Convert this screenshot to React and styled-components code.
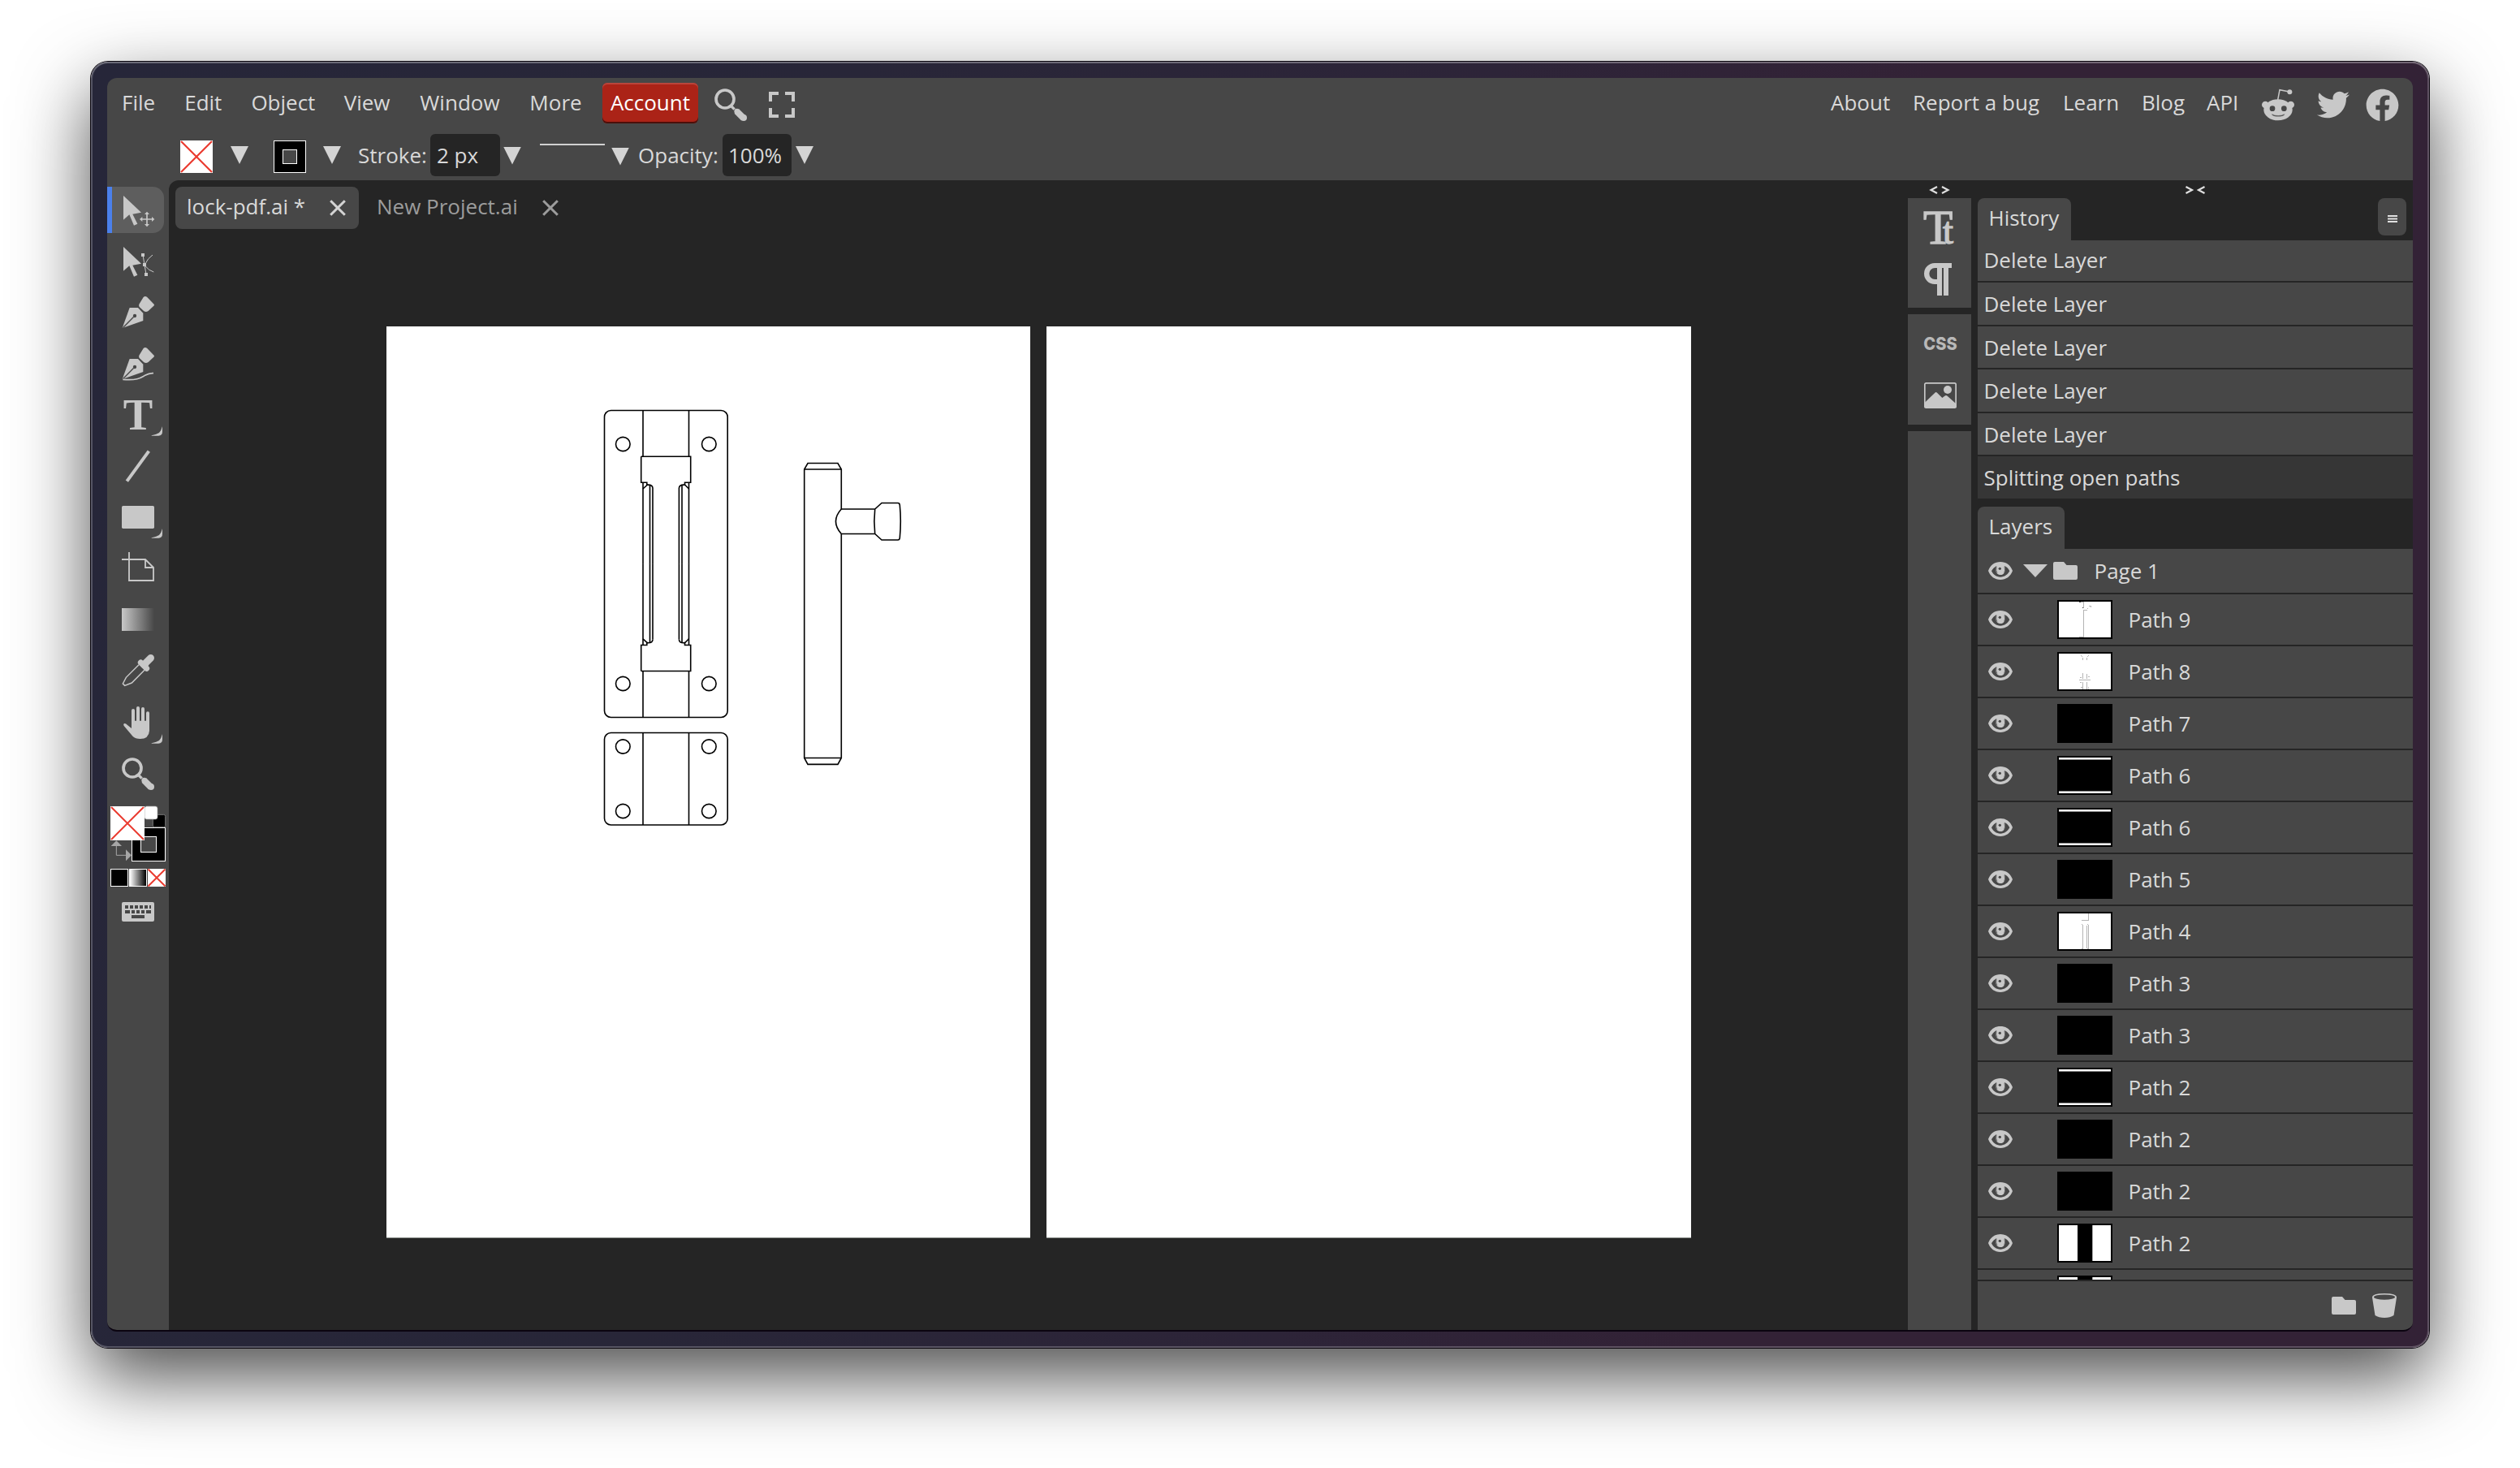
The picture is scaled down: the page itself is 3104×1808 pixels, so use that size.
import React from "react";
import styled, { createGlobalStyle } from "styled-components";
import { FaTwitter, FaFacebook } from "react-icons/fa";

const c = {
  panel: "#474747",
  dark: "#252525",
  text: "#d9d9d9",
  icon: "#c8c8c8",
  line: "#252525",
};

const Global = createGlobalStyle`
  * { box-sizing: border-box; }
  body { margin: 0; background: #fff; }
  svg { display: block; flex: none; }
`;

const Desktop = styled.div`
  width: 3104px;
  height: 1808px;
  padding: 76px 112px 148px;
  background: #fff;
  overflow: hidden;
  font-family: "Open Sans", "Noto Sans", sans-serif;
  font-size: 26px;
  color: ${c.text};
  white-space: nowrap;
`;

const Frame = styled.div`
  width: 2880px;
  height: 1584px;
  padding: 20px 20px 20px;
  border-radius: 21px;
  background: linear-gradient(100deg, #262639 0%, #282638 30%, #2d2438 55%, #332236 72%, #332236 100%);
  box-shadow: inset 0 0 0 2px rgba(255, 255, 255, 0.22), inset 0 2px 0 rgba(255, 255, 255, 0.12),
    0 0 0 1px #0c0810, 0 36px 90px rgba(0, 0, 0, 0.7);
`;

const AppShell = styled.div`
  height: 1544px;
  display: flex;
  flex-direction: column;
  border-radius: 12px;
  border-bottom: 2px solid #0b0410;
  background: ${c.panel};
  overflow: hidden;
`;

const MenuBar = styled.nav`
  height: 60px;
  display: flex;
  align-items: center;
  padding: 0 17px 0 1px;
`;

const MenuItem = styled.span`
  width: ${(p) => p.$w}px;
  padding-left: ${(p) => p.$pad ?? 17}px;
  line-height: 60px;
`;

const AccountButton = styled.span`
  width: 118px;
  height: 50px;
  margin-top: 2px;
  margin-left: 17px;
  border-radius: 6px;
  background: #ab2317;
  box-shadow: inset 0 2px 0 #b9453b, inset 0 -2px 0 #4b0f0a;
  color: #fff;
  text-align: center;
  line-height: 48px;
`;

const MenuIcons = styled.div`
  display: flex;
  gap: 27px;
  margin-left: 20px;
  padding-top: 5px;
`;

const Links = styled.div`
  display: flex;
  align-items: center;
  margin-left: auto;
`;

const Social = styled.span`
  display: flex;
  padding-top: 6px;
  margin-left: ${(p) => p.$gap}px;
  color: ${c.icon};
`;

const OptionsBar = styled.div`
  height: 66px;
  display: flex;
  align-items: center;
  padding: 4px 0 0 90px;
`;

const Swatch = styled.div`
  width: 40px;
  height: 40px;
  margin-top: 4px;
  margin-left: ${(p) => p.$gap ?? 0}px;
`;

const Dropdown = styled.div`
  width: 22px;
  height: 22px;
  margin-left: ${(p) => p.$gap}px;
  margin-top: ${(p) => p.$drop ?? 0}px;
  background: ${(p) => p.$color ?? "#d4d4d4"};
  clip-path: polygon(0 0, 100% 0, 50% 100%);
`;

const OptionLabel = styled.span`
  width: ${(p) => p.$w}px;
  margin-left: ${(p) => p.$gap}px;
  line-height: 52px;
`;

const Field = styled.div`
  width: ${(p) => p.$w}px;
  height: 52px;
  padding-left: ${(p) => p.$pad ?? 8}px;
  border-radius: 6px;
  background: ${c.dark};
  line-height: 52px;
`;

const DashPreview = styled.div`
  width: 80px;
  height: 2px;
  margin: 0 0 26px 23px;
  background: #d0d0d0;
`;

const Main = styled.div`
  flex: 1;
  min-height: 0;
  display: flex;
`;

const ToolColumn = styled.aside`
  width: 76px;
  display: flex;
  flex-direction: column;
  gap: 6px;
  padding-top: 8px;
`;

const Tool = styled.div`
  width: ${(p) => (p.$active ? 70 : 76)}px;
  height: 57px;
  border-radius: 0 14px 14px 0;
  background: ${(p) => (p.$active ? "linear-gradient(90deg, #4b80ec 6px, #5e5e5e 6px)" : "none")};
`;

const ModeRow = styled.div`
  height: 22px;
  display: flex;
  gap: 1px;
  padding-left: 4px;
`;

const ModeBox = styled.div`
  width: 22px;
  height: 22px;
  border: 1px solid #fff;
  background: ${(p) => p.$bg};
`;

const Workspace = styled.section`
  flex: 1;
  display: flex;
  flex-direction: column;
  background: ${c.dark};
  border-top-left-radius: 12px;
`;

const Tabs = styled.div`
  display: flex;
  padding: 8px 0 0 8px;
`;

const Tab = styled.div`
  height: 52px;
  display: flex;
  align-items: center;
  padding-left: ${(p) => (p.$active ? 14 : 22)}px;
  width: ${(p) => p.$w}px;
  border-radius: 8px;
  background: ${(p) => (p.$active ? c.panel : "transparent")};
  color: ${(p) => (p.$active ? c.text : "#9c9c9c")};
`;

const TabName = styled.span`
  width: ${(p) => p.$w}px;
  line-height: 52px;
  padding-bottom: 4px;
`;

const Pages = styled.div`
  display: flex;
  gap: 20px;
  padding: 120px 0 0 267.5px;
`;

const Page = styled.div`
  width: 793.5px;
  height: 1122px;
  padding: 78px 0 0 244.5px;
  background: #fff;
  box-shadow: 0 1px 0 #868b87;
`;

const Strip = styled.div`
  width: 78px;
  display: flex;
  flex-direction: column;
`;

const Collapse = styled.div`
  height: 22px;
  display: flex;
  justify-content: center;
  align-items: center;
  padding-top: 1px;
`;

const StripGroup = styled.div`
  height: ${(p) => p.$h};
  flex: ${(p) => (p.$grow ? 1 : "none")};
  background: ${c.panel};
`;

const StripBox = styled.div`
  display: flex;
  flex-direction: column;
  flex: 1;
  gap: 8px;
`;

const SideArea = styled.aside`
  width: 622px;
  display: flex;
  gap: 8px;
  background: ${c.dark};
`;

const PanelColumn = styled.div`
  width: 536px;
  display: flex;
  flex-direction: column;
`;

const PanelHead = styled.div`
  height: 52px;
  display: flex;
  justify-content: space-between;
  padding-right: 8px;
`;

const PanelTab = styled.div`
  width: ${(p) => p.$w}px;
  height: 52px;
  padding: 0 0 4px 13.5px;
  border-radius: 8px 8px 0 0;
  background: ${c.panel};
  line-height: 48px;
`;

const PanelMenu = styled.div`
  width: 35px;
  height: 46px;
  display: flex;
  align-items: center;
  justify-content: center;
  padding-top: 4px;
  border-radius: 8px;
  background: ${c.panel};
`;

const HistoryList = styled.div`
  height: 318px;
  display: flex;
  flex-direction: column;
  justify-content: flex-end;
  overflow: hidden;
  margin-bottom: 10px;
`;

const HistoryRow = styled.div`
  flex: none;
  height: ${(p) => p.$h}px;
  padding-left: 7.5px;
  line-height: 52px;
  background: ${(p) => (p.$current ? "#363636" : c.panel)};
  border-bottom: ${(p) => (p.$current ? 0 : 2)}px solid ${c.line};
`;

const LayerList = styled.div`
  flex: 1;
  min-height: 0;
  overflow: hidden;
  background: ${c.panel};
`;

const LayerRow = styled.div`
  height: ${(p) => (p.$group ? 56 : 64)}px;
  display: flex;
  align-items: center;
  padding-left: 13px;
  border-bottom: 2px solid ${c.line};
  line-height: ${(p) => (p.$group ? 54 : 62)}px;
`;

const Thumb = styled.div`
  width: 68px;
  height: 48px;
  margin: 0 19.5px 0 55px;
  border: 2px solid #000;
  background: ${(p) => p.$bg};
`;

const GroupIcons = styled.div`
  width: 100.5px;
  display: flex;
  align-items: center;
  gap: 7px;
  padding-left: 13px;
`;

const GroupArrow = styled(Dropdown)`
  width: 30px;
  height: 16px;
`;

const Footer = styled.div`
  height: 62px;
  display: flex;
  justify-content: flex-end;
  align-items: center;
  gap: 20px;
  padding: 0 20px 1px 0;
  border-top: 2px solid ${c.line};
  background: ${c.panel};
`;

/* ---------- small drawings ---------- */

const Cross = ({ size = 40 }) => (
  <svg width={size} height={size} viewBox="0 0 40 40">
    <rect width="40" height="40" fill="#fff" />
    <path d="M1 1L39 39M39 1L1 39" stroke="#ea3b30" strokeWidth={size < 30 ? 3.6 : 2.2} />
  </svg>
);

const StrokeSwatch = () => (
  <svg width="40" height="40" viewBox="0 0 40 40">
    <rect width="40" height="40" fill="#fff" />
    <rect x="1" y="1" width="38" height="38" fill="#000" />
    <rect x="11.500" y="11.500" width="17" height="17" fill={c.panel} stroke="#fff" />
  </svg>
);

const Magnifier = (props) => (
  <g {...props}>
    <circle cx="39" cy="39" r="33" fill="none" stroke={c.icon} strokeWidth="11" />
    <path d="M61 64L74 77" stroke={c.icon} strokeWidth="10" />
    <path d="M82 84L108 110" stroke={c.icon} strokeWidth="24" />
    <circle cx="108" cy="108" r="12" fill={c.icon} />
    <circle cx="83" cy="84" r="10" fill={c.icon} />
  </g>
);

const CloseX = ({ color }) => (
  <svg width="20" height="20" viewBox="0 0 20 20">
    <path d="M1.200 1.200L18.800 18.800M18.800 1.200L1.200 18.800" stroke={color} strokeWidth="3" />
  </svg>
);

const Reddit = () => (
  <svg width="40" height="40" viewBox="0 0 120 120">
    <g fill={c.icon}>
      <path d="M59 42L66 5L98 11" fill="none" stroke={c.icon} strokeWidth="4.500" />
      <circle cx="103" cy="13" r="9" />
      <circle cx="13" cy="60" r="13" />
      <circle cx="107" cy="60" r="13" />
      <ellipse cx="60" cy="79" rx="53" ry="39" />
    </g>
    <g fill={c.panel}>
      <circle cx="39" cy="74" r="10" />
      <circle cx="82" cy="74" r="10" />
      <path d="M37 95Q60 106 84 95Q80 103 60 103Q41 103 37 95Z" stroke={c.panel} strokeWidth="1" />
    </g>
  </svg>
);

const Eye = () => (
  <svg width="30" height="24" viewBox="0 0 90 72">
    <path
      d="M0 36C8 14 24 3 45 3S82 14 90 36C82 57 66 69 45 69S8 57 0 36ZM12 37C18 50 30 59 45 59S72 50 79 37C74 27 68 21 60 18C62 22 63 27 62 33C61 45 54 51 45 51S29 45 28 34C28 27 29 22 31 18C23 22 17 28 12 37Z"
      fill={c.icon}
      fillRule="evenodd"
    />
    <path d="M45 50C36 50 31 44 31 35S37 20 46 20S61 27 61 35S55 50 45 50Z" fill={c.icon} />
    <circle cx="43" cy="28" r="5" fill={c.panel} />
    <path d="M30 20Q27 35 33 44M60 20Q64 35 59 44" fill="none" stroke={c.panel} strokeWidth="2" />
  </svg>
);

const Folder = () => (
  <svg width="30" height="22" viewBox="0 0 30 22">
    <path d="M2 0H13L16.500 4H28Q30 4 30 6V20Q30 22 28 22H2Q0 22 0 20V2Q0 0 2 0Z" fill={c.icon} />
  </svg>
);

const Trash = () => (
  <svg width="30" height="30" viewBox="0 0 30 30">
    <path d="M0 5L3.500 27Q8 30 15 30T26.500 27L30 5Q30 0 15 0T0 5Z" fill={c.icon} />
    <ellipse cx="15" cy="4.600" rx="13" ry="3.200" fill={c.panel} />
  </svg>
);

const Corner = ({ y }) => (
  <path
    d="M200 34Q220 29 228 24Q236 16 240 0V20Q240 34 226 35H200Z"
    transform={`translate(0 ${y})`}
    fill={c.icon}
  />
);

const Arrow = ({ y }) => (
  <path
    d="M96 63L162 125L130 131L148 167L135 173L118 133L96 152Z"
    transform={`translate(0 ${y})`}
    fill={c.icon}
  />
);

const Nib = ({ y }) => (
  <g transform={`translate(0 ${y})`}>
    <path d="M92 552L119 477H150L169 497V525Z" fill={c.icon} />
    <path d="M94 551L134 511" stroke={c.panel} strokeWidth="4" />
    <circle cx="138" cy="507" r="6.500" fill={c.panel} />
    <path
      d="M170 438Q176 432 183 437L209 464Q212 467 208 470L188 489Q180 494 172 490L155 474Q152 470 154 464Z"
      fill={c.icon}
    />
  </g>
);

const toolDrawings = [
  <g key="move">
    <Arrow y={0} />
    <path d="M183 128V172M161 150H205" stroke={c.icon} strokeWidth="5" />
    <path
      d="M183 122L192 132H174ZM183 178L192 168H174ZM156 150L166 141V159ZM211 150L201 141V159Z"
      fill={c.icon}
    />
  </g>,
  <g key="direct">
    <Arrow y={189} />
    <path d="M162 276h12v12h-12zM168 312h12v12h-12zM174 348h12v12h-12z" fill={c.icon} />
    <path
      d="M168 282L174 318L180 354M176 316Q186 294 204 282M176 322Q190 340 208 345"
      fill="none"
      stroke={c.icon}
      strokeWidth="3"
    />
  </g>,
  <Nib key="pen" y={0} />,
  <g key="curvature">
    <Nib y={189} />
    <path d="M94 742C150 746 160 736 176 727Q192 718 207 719" fill="none" stroke={c.icon} strokeWidth="5" />
  </g>,
  <g key="type">
    <text
      x="150"
      y="927"
      textAnchor="middle"
      fontFamily="Liberation Serif, serif"
      fontWeight="700"
      fontSize="164"
      fill={c.icon}
    >
      T
    </text>
    <Corner y={915} />
  </g>,
  <path key="line" d="M109 1118L190 1007" stroke={c.icon} strokeWidth="12" />,
  <g key="rect">
    <rect x="90" y="1209" width="120" height="84" rx="5" fill={c.icon} />
    <Corner y={1293} />
  </g>,
  <path
    key="artboard"
    d="M117 1380V1485H207V1437L177 1407H90M177 1407V1437H207"
    fill="none"
    stroke={c.icon}
    strokeWidth="5.500"
  />,
  <g key="gradient">
    <defs>
      <linearGradient id="fade">
        <stop offset="0" stopColor="#c8c8c8" />
        <stop offset="1" stopColor="#474747" />
      </linearGradient>
    </defs>
    <rect x="90" y="1587" width="120" height="84" fill="url(#fade)" />
  </g>,
  <g key="dropper">
    <path
      d="M153 1796L106 1843L94 1866L101 1873L127 1863L174 1816"
      fill="none"
      stroke={c.icon}
      strokeWidth="4.500"
    />
    <path d="M172 1796L197 1771" stroke={c.icon} strokeWidth="26" strokeLinecap="round" />
    <path d="M160 1788L182 1810" stroke={c.icon} strokeWidth="21" strokeLinecap="round" />
    <path d="M164 1786L182 1806L190 1796L176 1780Z" fill={c.icon} />
  </g>,
  <g key="hand">
    <path
      d="M132 1965V2020M150 1956V2020M168 1959V2020M186 1975V2020"
      stroke={c.icon}
      strokeWidth="12"
      strokeLinecap="round"
    />
    <path
      d="M126 2003H192V2040Q190 2070 158 2070Q140 2070 131 2061L98 2022Q94 2014 101 2013Q106 2013 110 2018L126 2031Z"
      fill={c.icon}
    />
    <Corner y={2052} />
  </g>,
  <Magnifier key="zoom" transform="translate(90 2139)" />,
];

const ColorWell = () => (
  <svg width="76" height="78" viewBox="36 888 228 234">
    <rect x="126" y="987" width="126" height="126" fill="#fff" />
    <rect x="129" y="990" width="120" height="120" fill="#000" />
    <rect x="160.500" y="1021.500" width="57" height="57" fill={c.panel} stroke="#fff" strokeWidth="3" />
    <rect x="205" y="940" width="46" height="46" rx="6" fill="#000" stroke="#777" strokeWidth="3" />
    <rect x="174" y="909" width="48" height="48" rx="8" fill="#fff" stroke="#999" strokeWidth="2" />
    <rect x="48" y="909" width="126" height="126" fill="#fff" />
    <path d="M51 912L171 1032M171 912L51 1032" stroke="#ea3b30" strokeWidth="6" />
    <path d="M70 1050V1090H108" fill="none" stroke="#a6a6a6" strokeWidth="3" />
    <path d="M50 1056L70 1036L90 1056ZM105 1069V1111L126 1090Z" fill="#a6a6a6" />
  </svg>
);

const Keyboard = () => (
  <svg width="76" height="57" viewBox="36 1224 228 171">
    <rect x="90" y="1263" width="120" height="72" rx="6" fill={c.icon} />
    <path
      d="M102 1281H114M120 1281H132M138 1281H150M156 1281H168M174 1281H186M192 1281H198M102 1299H120M126 1299H138M144 1299H156M162 1299H174M180 1299H198M126 1317H174"
      stroke={c.panel}
      strokeWidth="12"
    />
  </svg>
);

const CharacterIcons = () => (
  <svg width="78" height="135" viewBox="90 72 234 405">
    <text
      x="147"
      y="239"
      fontFamily="Liberation Serif, serif"
      fontSize="178"
      fill={c.icon}
      stroke={c.icon}
      strokeWidth="4"
    >
      T
      <tspan dx="-37" fontSize="140">
        t
      </tspan>
    </text>
    <path
      d="M252 312V330H240V432H222V330H216V432H198V390H189A39 39 0 0 1 189 312ZM198 330H190A21 21 0 0 0 190 372H198Z"
      fill={c.icon}
    />
  </svg>
);

const CssAndImageIcons = () => (
  <svg width="78" height="136" viewBox="90 501 234 408">
    <text
      x="148"
      y="633"
      fontFamily="Inter, sans-serif"
      fontWeight="800"
      fontSize="66"
      textLength="124"
      lengthAdjust="spacingAndGlyphs"
      fill="#b8b8b8"
    >
      CSS
    </text>
    <rect x="152.500" y="755.500" width="115" height="91" rx="5" fill="none" stroke={c.icon} strokeWidth="5" />
    <circle cx="237" cy="780" r="15" fill={c.icon} />
    <path
      d="M152 828L190 791Q194 787 198 791L217 810L226 803Q231 799 236 803L268 832V846H152Z"
      fill={c.icon}
    />
  </svg>
);

const Holes = ({ ys }) =>
  ys.flatMap((y) =>
    [47.3, 153.3].map((x) => <ellipse key={`${x}-${y}`} cx={x} cy={y} rx="8.800" ry="8.600" />)
  );

const SlotEnd = () => (
  <g>
    <path d="M72 25.400V82.300M128.500 25.400V82.300M69.700 82.300H130.700V114.300H123.500V117.200Q117 116.500 116.400 121M69.700 82.300V114.300H76.800V117.200Q83.500 116.500 84 121" />
    <path d="M72 122L77.500 117M128.500 122L123.500 117" />
    <path d="M72 114.300V214.500M128.500 114.300V214.500M80.500 117.500V214.500M120 117.500V214.500M84 121V214.500M116.400 121V214.500" />
  </g>
);

const LockDrawing = () => (
  <svg width="420" height="560" viewBox="0 0 420 560" fill="none" stroke="#000" strokeWidth="1.600">
    <rect x="24.500" y="25.500" width="151.700" height="378" rx="8" />
    <SlotEnd />
    <g transform="matrix(1 0 0 -1 0 428.800)">
      <SlotEnd />
    </g>
    <Holes ys={[67, 362]} />
    <rect x="24.500" y="422.500" width="151.700" height="113.500" rx="8" />
    <path d="M72 422.500V536M128.500 422.500V536" />
    <Holes ys={[439.5, 519]} />
    <path d="M316.300 147V98L312 90.500H275L270.700 98V453.500L275 461.400H312L316.300 453.500V177.500M270.700 98H316.300M270.700 453.500H316.300" />
    <path d="M316.300 147H357.700L366 139.500H386Q388 139.500 388.300 142Q390.300 162 388.300 182.500Q388 185 386 185H366L357.700 177.500H316.300M316.300 147Q302.600 162 316.300 177.500M357.700 147Q356 162 357.700 177.500" />
  </svg>
);

const ThumbLines = ({ d, dark }) => (
  <svg width="64" height="44" viewBox="0 0 64 44" shapeRendering="crispEdges" fill="none" stroke="#b4b4b4">
    <path d={d} />
    {dark && <path d={dark} stroke="#444" />}
  </svg>
);

const white = "#fff";
const solid = "#000";
const banded =
  "linear-gradient(#fff 2px, #8a8a8a 2px 3px, #000 3px 41px, #8a8a8a 41px 42px, #fff 42px)";
const column = "linear-gradient(90deg, #fff 23px, #000 23px 41px, #aaa 41px 42px, #fff 42px)";

const layers = [
  [
    "Path 9",
    white,
    <ThumbLines
      key="t"
      d="M25 .5H31M30.500 0V8M30.500 11V44M30 10.500H35M25 43.500H31M37 5.500H39V7M36 8.500H35"
      dark="M25 .5H27M29 7.500H30"
    />,
  ],
  [
    "Path 8",
    white,
    <ThumbLines
      key="t"
      d="M27 2.500H28M28 3.500H29M29.500 5V8M37 2.500H36M35.500 3V4M34.500 5V8M29.500 24V31M34.500 25V31M25 32.500H39M29.500 35V44M34.500 35V44M26 29.500H28M36 28.500H38M26 35.500H28M27 41.500H29M36 41.500H37M36 43.500H37"
    />,
  ],
  ["Path 7", solid],
  ["Path 6", banded],
  ["Path 6", banded],
  ["Path 5", solid],
  [
    "Path 4",
    white,
    <ThumbLines
      key="t"
      d="M36.500 0V9M28 8.500H37M29.500 14V44M34.500 15V43M36.500 14V44M28 13.500H29M35 13.500H36M28 43.500H30M35 43.500H37"
    />,
  ],
  ["Path 3", solid],
  ["Path 3", solid],
  ["Path 2", banded],
  ["Path 2", solid],
  ["Path 2", solid],
  ["Path 2", column],
  ["", column],
];

const history = [
  ["Delete Layer", 54],
  ["Delete Layer", 54],
  ["Delete Layer", 53],
  ["Delete Layer", 54],
  ["Delete Layer", 53],
  ["Splitting open paths", 52, true],
];

const menu = [
  ["File", 77.2],
  ["Edit", 82.2],
  ["Object", 114.3],
  ["View", 93.7],
  ["Window", 135],
  ["More", 89.6],
];

const links = [
  ["About", 101],
  ["Report a bug", 185],
  ["Learn", 97],
  ["Blog", 80],
  ["API", 64],
];

const Chevrons = ({ d }) => (
  <svg width="26" height="10" viewBox="0 0 26 10">
    <path d={d} fill="none" stroke="#e0e0e0" strokeWidth="2.200" />
  </svg>
);

export default function App() {
  return (
    <Desktop>
      <Global />
      <Frame>
        <AppShell>
          <MenuBar>
            {menu.map(([label, w]) => (
              <MenuItem key={label} $w={w}>
                {label}
              </MenuItem>
            ))}
            <AccountButton>Account</AccountButton>
            <MenuIcons>
              <svg width="40" height="40" viewBox="0 0 120 120">
                <Magnifier />
              </svg>
              <svg width="32" height="40" viewBox="0 0 32 40">
                <path
                  d="M2 16V6H12M20 6H30V16M30 24V34H20M12 34H2V24"
                  fill="none"
                  stroke={c.icon}
                  strokeWidth="4"
                />
              </svg>
            </MenuIcons>
            <Links>
              {links.map(([label, w]) => (
                <MenuItem key={label} $w={w} $pad={0}>
                  {label}
                </MenuItem>
              ))}
              <Social $gap={4}>
                <Reddit />
              </Social>
              <Social $gap={28}>
                <FaTwitter size={40} />
              </Social>
              <Social $gap={20}>
                <FaFacebook size={41} />
              </Social>
            </Links>
          </MenuBar>
          <OptionsBar>
            <Swatch>
              <Cross />
            </Swatch>
            <Dropdown $gap={22} />
            <Swatch $gap={31}>
              <StrokeSwatch />
            </Swatch>
            <Dropdown $gap={21} />
            <OptionLabel $gap={21} $w={89}>
              Stroke:
            </OptionLabel>
            <Field $w={86}>2 px</Field>
            <Dropdown $gap={4} $drop={1} />
            <DashPreview />
            <Dropdown $gap={8} $drop={3} />
            <OptionLabel $gap={11} $w={104}>
              Opacity:
            </OptionLabel>
            <Field $w={85} $pad={7}>
              100%
            </Field>
            <Dropdown $gap={5} />
          </OptionsBar>
          <Main>
            <ToolColumn>
              {toolDrawings.map((drawing, i) => (
                <Tool key={i} $active={i === 0}>
                  <svg width="76" height="57" viewBox={`36 ${30 + 189 * i} 228 171`} overflow="visible">
                    {drawing}
                  </svg>
                </Tool>
              ))}
              <ColorWell />
              <ModeRow>
                <ModeBox $bg="#000" />
                <ModeBox $bg="linear-gradient(90deg, #fff, #000)" />
                <Cross size={22} />
              </ModeRow>
              <Keyboard />
            </ToolColumn>
            <Workspace>
              <Tabs>
                <Tab $active $w={226}>
                  <TabName $w={176}>lock-pdf.ai *</TabName>
                  <CloseX color="#d4d4d4" />
                </Tab>
                <Tab $w={260}>
                  <TabName $w={204}>New Project.ai</TabName>
                  <CloseX color="#9c9c9c" />
                </Tab>
              </Tabs>
              <Pages>
                <Page>
                  <LockDrawing />
                </Page>
                <Page />
              </Pages>
            </Workspace>
            <SideArea>
              <Strip>
                <Collapse>
                  <Chevrons d="M10 1L2.500 5L10 9M16 1L23.500 5L16 9" />
                </Collapse>
                <StripBox>
                  <StripGroup $h="135px">
                    <CharacterIcons />
                  </StripGroup>
                  <StripGroup $h="136px">
                    <CssAndImageIcons />
                  </StripGroup>
                  <StripGroup $grow />
                </StripBox>
              </Strip>
              <PanelColumn>
                <Collapse>
                  <Chevrons d="M1.500 1L9 5L1.500 9M24.500 1L17 5L24.500 9" />
                </Collapse>
                <PanelHead>
                  <PanelTab $w={115}>History</PanelTab>
                  <PanelMenu>
                    <svg width="12" height="9" viewBox="0 0 12 9">
                      <path d="M0 1H12M0 4.500H12M0 8H12" stroke="#e0e0e0" strokeWidth="1.800" />
                    </svg>
                  </PanelMenu>
                </PanelHead>
                <HistoryList>
                  {history.map(([label, h, current], i) => (
                    <HistoryRow key={i} $h={h} $current={current}>
                      {label}
                    </HistoryRow>
                  ))}
                </HistoryList>
                <PanelHead>
                  <PanelTab $w={107}>Layers</PanelTab>
                </PanelHead>
                <LayerList>
                  <LayerRow $group>
                    <Eye />
                    <GroupIcons>
                      <GroupArrow $gap={0} $color={c.icon} />
                      <Folder />
                    </GroupIcons>
                    Page 1
                  </LayerRow>
                  {layers.map(([label, bg, drawing], i) => (
                    <LayerRow key={i}>
                      <Eye />
                      <Thumb $bg={bg}>{drawing}</Thumb>
                      {label}
                    </LayerRow>
                  ))}
                </LayerList>
                <Footer>
                  <Folder />
                  <Trash />
                </Footer>
              </PanelColumn>
            </SideArea>
          </Main>
        </AppShell>
      </Frame>
    </Desktop>
  );
}
